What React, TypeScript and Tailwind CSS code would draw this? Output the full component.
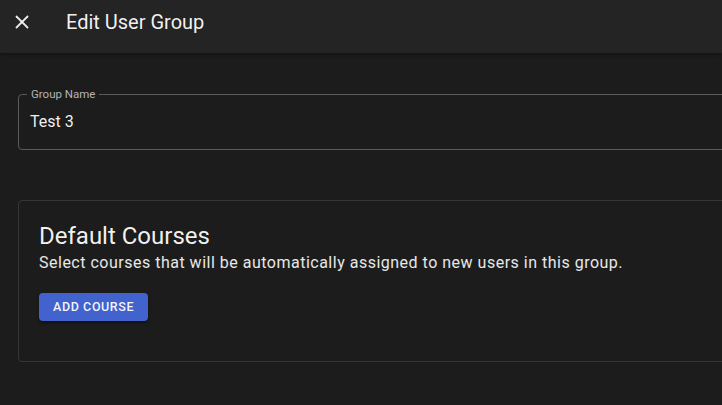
import { X } from "lucide-react";

export default function App() {
  return (
    <div
      className="w-[722px] h-[405px] overflow-hidden bg-[#1c1c1c] text-white"
      style={{ fontFamily: "Roboto, 'Liberation Sans', sans-serif" }}
    >
      <header className="relative z-10 h-[53px] bg-[#242424] shadow-[0_2px_4px_rgba(0,0,0,0.35)]">
        <div className="h-[44px] flex items-center pl-[11px]">
          <X size={22} strokeWidth={2} className="text-white/90" />
          <h1 className="ml-[33px] text-[20px] leading-none text-white/95">Edit User Group</h1>
        </div>
      </header>

      <div className="pl-[18px] pt-[41px] w-[800px]">
        <div className="relative h-[56px] border border-[#5a5a5a] rounded-[4px] px-[11px] flex items-center">
          <span className="absolute left-[8px] -top-[7px] px-[4px] bg-[#1c1c1c] text-[11.5px] leading-[12px] text-[#b5b5b5]">
            Group Name
          </span>
          <div className="text-[16px] leading-none text-white/95 -mt-[1px]">Test 3</div>
        </div>

        <section className="mt-[50px] h-[162px] border border-[#363636] rounded-[4px] pl-[20px] pt-[21px]">
          <h2 className="text-[24px] leading-[28px] text-white/95">Default Courses</h2>
          <p className="mt-[1px] text-[16px] leading-[24px] tracking-[0.5px] text-white/90">
            Select courses that will be automatically assigned to new users in this group.
          </p>
          <button className="mt-[18px] h-[28px] px-[14px] rounded-[4px] bg-[#4262cd] text-[12.5px] font-medium tracking-[0.6px] text-white/95 shadow-[0_2px_3px_rgba(0,0,0,0.4)]">
            ADD COURSE
          </button>
        </section>
      </div>
    </div>
  );
}
